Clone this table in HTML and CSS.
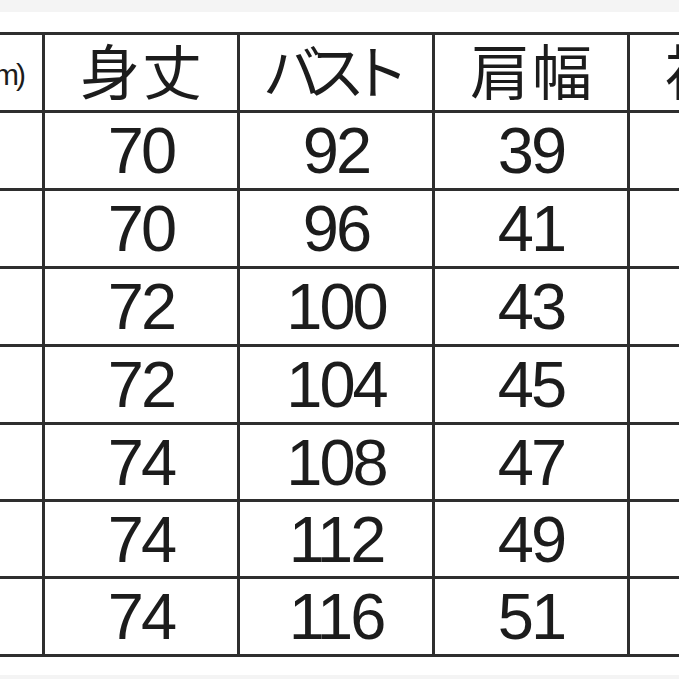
FILE: index.html
```html
<!DOCTYPE html>
<html lang="ja">
<head>
<meta charset="utf-8">
<title>サイズ表</title>
<link rel="stylesheet" href="styles.css">
</head>
<body>
<div class="sheet">
  <table class="chart">
    <thead>
      <tr class="r-head">
        <th class="unit"><span class="unit-text">(cm)</span></th>
        <th><span class="head">身丈</span></th>
        <th><span class="head kana">バスト</span></th>
        <th><span class="head">肩幅</span></th>
        <th><span class="head">袖丈</span></th>
      </tr>
    </thead>
    <tbody>
      <tr class="r78"><td class="lbl">S</td><td>70</td><td>92</td><td>39</td><td></td></tr>
      <tr class="r78"><td class="lbl">M</td><td>70</td><td>96</td><td>41</td><td></td></tr>
      <tr class="r78"><td class="lbl">L</td><td>72</td><td>100</td><td>43</td><td></td></tr>
      <tr class="r78"><td class="lbl">LL</td><td>72</td><td>104</td><td>45</td><td></td></tr>
      <tr class="r77"><td class="lbl">3L</td><td>74</td><td>108</td><td>47</td><td></td></tr>
      <tr class="r77"><td class="lbl">4L</td><td>74</td><td>112</td><td>49</td><td></td></tr>
      <tr class="r78"><td class="lbl">5L</td><td>74</td><td>116</td><td>51</td><td></td></tr>
    </tbody>
  </table>
</div>
</body>
</html>
```

FILE: styles.css
```css
html, body {
  margin: 0;
  padding: 0;
  background: #f4f4f4;
  overflow: hidden;
}

.sheet {
  margin-top: 12px;
  height: 663px;
  background: #ffffff;
  padding-top: 20px;
  box-sizing: border-box;
  overflow: hidden;
}

.chart {
  border-collapse: collapse;
  table-layout: fixed;
  width: 975px;
  margin-left: -153px;
  color: #1c1c1c;
}

.chart th,
.chart td {
  width: 192px;
  border: 3px solid #2e2e2e;
  padding: 0;
  text-align: center;
  vertical-align: middle;
  white-space: nowrap;
}

.chart th {
  font-family: "Noto Sans CJK JP", "Noto Sans", sans-serif;
  font-weight: 400;
  line-height: 1;
  padding-bottom: 8px;
}

.head {
  font-size: 60px;
  letter-spacing: 2px;
  padding-left: 2px;
}

.chart td {
  font-family: "Liberation Sans", Arial, sans-serif;
  font-size: 65px;
  line-height: 1;
  letter-spacing: -3px;
}

.r-head { height: 78px; }
.r78 { height: 78px; }
.r77 { height: 77px; }

.head.kana {
  font-size: 58px;
  letter-spacing: -14px;
  padding-left: 0;
  padding-right: 14px;
}

.chart th.unit {
  text-align: right;
}

.unit-text {
  display: inline-block;
  font-family: "Liberation Sans", Arial, sans-serif;
  font-size: 30px;
  letter-spacing: -3px;
  margin-right: 19px;
  margin-top: 12px;
}

.chart td.lbl {
  font-size: 40px;
}
```
